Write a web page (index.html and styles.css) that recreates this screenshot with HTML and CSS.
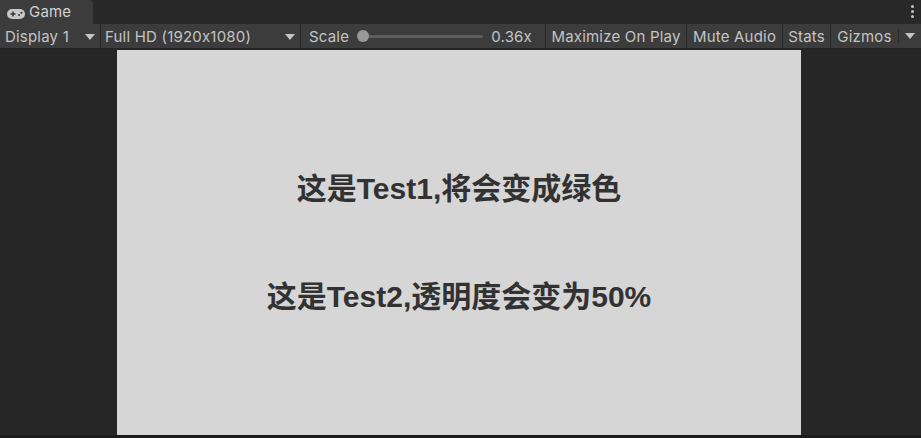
FILE: index.html
```html
<!DOCTYPE html>
<html lang="zh">
<head>
<meta charset="utf-8">
<title>Game</title>
<link rel="stylesheet" href="styles.css">
</head>
<body>
<div class="window">
  <div class="tabbar">
    <div class="tab">
      <svg class="tab-icon" width="18" height="10" viewBox="0 0 18 10">
        <rect x="0" y="0" width="18" height="10" rx="5" ry="5" fill="#c8c8c8"/>
        <rect x="3.5" y="4.2" width="5" height="1.6" fill="#3c3c3c"/>
        <rect x="5.2" y="2.5" width="1.6" height="5" fill="#3c3c3c"/>
        <circle cx="12" cy="6" r="1.1" fill="#3c3c3c"/>
        <circle cx="14.4" cy="3.8" r="1.1" fill="#3c3c3c"/>
      </svg>
      <span class="tab-label">Game</span>
    </div>
    <div class="tab-menu">
      <span class="dot"></span><span class="dot"></span><span class="dot"></span>
    </div>
  </div>
  <div class="toolbar">
    <div class="tb-item dropdown display">
      <span>Display 1</span><span class="caret"></span>
    </div>
    <div class="tb-item dropdown resolution">
      <span>Full HD (1920x1080)</span><span class="caret"></span>
    </div>
    <div class="tb-item scale">
      <span class="scale-label">Scale</span>
      <div class="slider"><span class="knob"></span></div>
      <span class="scale-value">0.36x</span>
    </div>
    <div class="tb-item button maximize">Maximize On Play</div>
    <div class="tb-item button mute">Mute Audio</div>
    <div class="tb-item button stats">Stats</div>
    <div class="tb-item button gizmos">Gizmos</div>
    <div class="tb-item gizmo-caret"><span class="caret"></span></div>
  </div>
  <div class="viewport">
    <div class="canvas">
      <p class="line">这是Test1,将会变成绿色</p>
      <p class="line">这是Test2,透明度会变为50%</p>
    </div>
  </div>
</div>
</body>
</html>
```
FILE: styles.css
```css
html, body {
  margin: 0;
  padding: 0;
  background: #282828;
}
body {
  width: 921px;
  height: 438px;
  overflow: hidden;
  font-family: Inter, "Noto Sans", sans-serif;
  font-feature-settings: "calt" 0;
}
.window {
  display: flex;
  flex-direction: column;
  width: 921px;
  height: 438px;
}
.tabbar {
  height: 24px;
  flex: none;
  display: flex;
  justify-content: space-between;
  background: #282828;
}
.tab {
  width: 93px;
  height: 24px;
  background: #3c3c3c;
  border-top-right-radius: 4px;
  display: flex;
  align-items: center;
  padding-left: 7px;
  box-sizing: border-box;
  gap: 4px;
}
.tab-icon {
  flex: none;
  margin-top: 3px;
}
.tab-label {
  color: #d2d2d2;
  font-size: 15px;
  line-height: 24px;
  letter-spacing: 0.2px;
}
.tab-menu {
  width: 18px;
  display: flex;
  flex-direction: column;
  align-items: center;
  padding-top: 5px;
  gap: 2px;
  box-sizing: border-box;
}
.dot {
  width: 3px;
  height: 3px;
  border-radius: 50%;
  background: #c4c4c4;
}
.toolbar {
  height: 25px;
  flex: none;
  display: flex;
  background: #3c3c3c;
  border-bottom: 1px solid #232323;
  box-sizing: border-box;
}
.tb-item {
  display: flex;
  align-items: center;
  color: #c4c4c4;
  font-size: 15px;
  letter-spacing: 0.2px;
  white-space: nowrap;
  box-sizing: border-box;
  border-right: 1px solid #262626;
  padding-top: 1px;
}
.dropdown {
  justify-content: space-between;
  padding: 1px 5px 0 5px;
}
.display { width: 101px; }
.resolution { width: 200px; padding-left: 4px; }
.caret {
  width: 0;
  height: 0;
  border-left: 5px solid transparent;
  border-right: 5px solid transparent;
  border-top: 6px solid #c4c4c4;
}
.scale {
  width: 245px;
  padding: 1px 13px 0 8px;
  gap: 8px;
}
.slider {
  flex: 1;
  height: 3px;
  background: #5e5e5e;
  border-radius: 2px;
  position: relative;
  margin-left: 5px;
}
.knob {
  position: absolute;
  left: -5px;
  top: -5px;
  width: 12px;
  height: 12px;
  border-radius: 50%;
  background: #999999;
}
.button {
  justify-content: center;
}
.maximize { width: 141px; }
.mute { width: 96px; }
.stats { width: 48px; }
.gizmos { width: 67px; border-right: none; }
.gizmo-caret {
  flex: 1;
  border-right: none;
  position: relative;
  justify-content: center;
  padding-top: 0;
}
.gizmo-caret::before {
  content: "";
  position: absolute;
  left: 0;
  top: 5px;
  bottom: 5px;
  width: 1px;
  background: #262626;
}
.viewport {
  flex: 1;
  display: flex;
  padding-top: 1px;
  padding-left: 117px;
  background: #262626;
  border-bottom: 3px solid #1c1c1c;
  box-sizing: border-box;
}
.canvas {
  width: 684px;
  background: #d6d6d6;
  display: flex;
  flex-direction: column;
  align-items: center;
  justify-content: center;
  gap: 78px;
}
.line {
  margin: 0;
  font-family: "Liberation Sans", "Noto Sans CJK SC", sans-serif;
  font-weight: bold;
  font-size: 30px;
  line-height: 30px;
  color: #323232;
}
```
